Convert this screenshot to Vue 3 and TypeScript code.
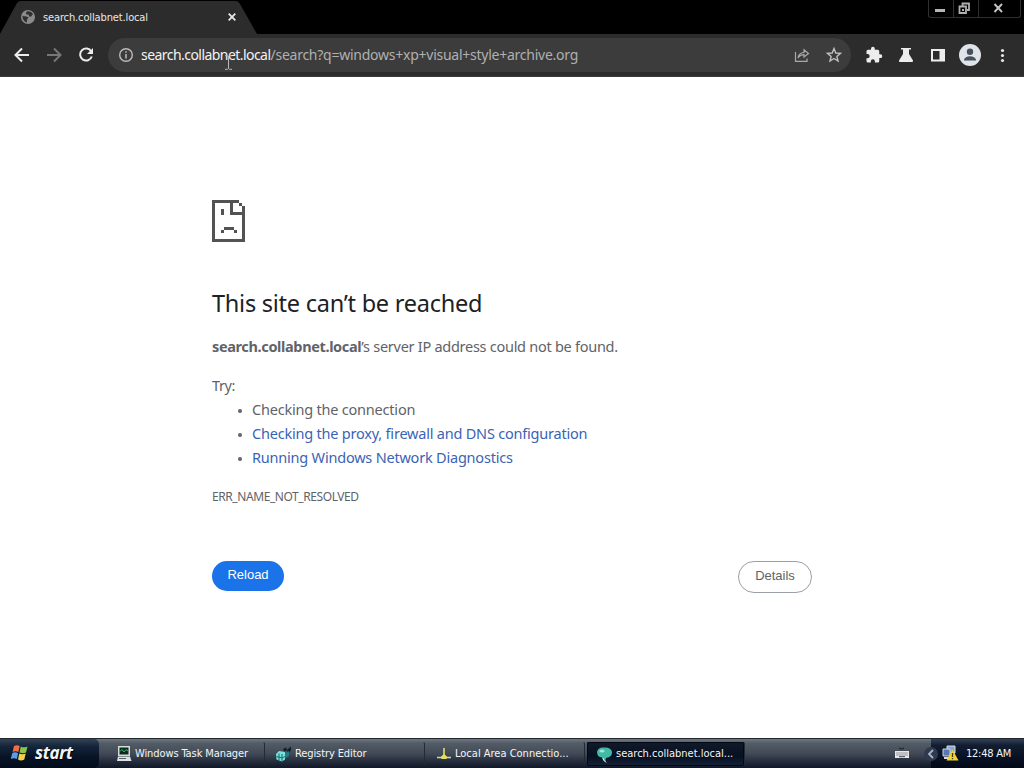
<script setup lang="ts">
interface Task {
  id: string
  label: string
  active?: boolean
}

const host = 'search.collabnet.local'
const query = '/search?q=windows+xp+visual+style+archive.org'

const tasks: Task[] = [
  { id: 'taskmgr', label: 'Windows Task Manager' },
  { id: 'regedit', label: 'Registry Editor' },
  { id: 'lan', label: 'Local Area Connectio...' },
  { id: 'browser', label: 'search.collabnet.local...', active: true },
]
</script>

<template>
  <div class="screen">
    <header class="titlebar">
      <div class="tab">
        <svg class="tab-shape" width="258" height="34" viewBox="0 0 258 34">
          <path d="M0 34L17 3Q18.500 1 21 1H236Q238.500 1 240 4L257 34Z" fill="#2c2c2c" />
        </svg>
        <svg class="globe" width="16" height="16" viewBox="0 0 16 16">
          <circle cx="8" cy="8" r="7" fill="#8b8b8b" />
          <path d="M2.500 6.500C4 8 6 6.500 8.500 8.500C8 10 6.500 9.500 7 13.400C4.500 13 2.300 10.500 2.500 6.500ZM7 2.500C9 2 11.500 2.700 13 5.200C11.500 6 12 8 9.800 7.800C8.500 7 9.500 5.500 7.500 5.500C5.500 5.500 5.500 3.500 7 2.500Z" fill="#303030" />
        </svg>
        <span class="tab-title">{{ host }}</span>
        <svg class="tab-close" width="8" height="8" viewBox="0 0 8 8"><path d="M.7.7L7.300 7.300M7.300.7L.7 7.300" stroke="#e8e8e8" stroke-width="1.800" /></svg>
      </div>
      <div class="window-controls">
        <span class="wc"><svg width="26" height="17"><path d="M6 10.500h10" stroke="#b5b5b5" stroke-width="3" /></svg></span>
        <span class="wc"><svg width="25" height="17"><path d="M8.500 5.500V3.500h6.500v6.500h-2M5.500 6.500h6.500v6.500h-6.500z" stroke="#b0b0b0" stroke-width="1.800" fill="none" /><path d="M8 9h2v2h-2z" fill="#b0b0b0" /></svg></span>
        <span class="wc wide"><svg width="41" height="17"><path d="M15.500 4l7.500 8M23 4l-7.500 8" stroke="#c4c4c4" stroke-width="1.900" /></svg></span>
      </div>
    </header>

    <div class="toolbar">
      <svg class="nav" width="24" height="24" viewBox="0 0 24 24"><path d="M19 12H6M12 5.500L5.500 12L12 18.500" /></svg>
      <svg class="nav dim" width="24" height="24" viewBox="0 0 24 24"><path d="M5 12H18M12 5.500L18.500 12L12 18.500" /></svg>
      <svg class="nav" width="24" height="24" viewBox="0 0 24 24"><path d="M17.300 8.500A6 6 0 1 0 17.800 13.500" /><path d="M19 5V11H13Z" fill="#ececec" stroke="none" /></svg>
      <div class="omnibox">
        <svg class="info" width="16" height="16" viewBox="0 0 16 16"><circle cx="8" cy="8" r="6.300" fill="none" stroke="#bcbcbc" stroke-width="1.400" /><path d="M8 7v4.500M8 4.200v1.600" stroke="#bcbcbc" stroke-width="1.500" /></svg>
        <span class="url"><span class="host">{{ host }}</span><span class="query">{{ query }}</span></span>
        <svg class="share" width="18" height="18" viewBox="0 0 18 18"><path d="M2.500 6V15.300H14V12.500M5 12C5.500 8.500 7.500 6.700 11 6.500V3.700L15.500 7.500L11 11V8.700C8.500 8.700 6.500 9.700 5 12Z" fill="none" stroke="#a9a9a9" stroke-width="1.200" /></svg>
        <svg class="star" width="18" height="18" viewBox="0 0 18 18"><path d="M9 2.600L10.800 7L15.500 7.300L11.900 10.400L13 15L9 12.500L5 15L6.100 10.400L2.500 7.300L7.200 7Z" fill="none" stroke="#c1c1c1" stroke-width="1.400" /></svg>
      </div>
      <div class="actions">
        <svg width="18" height="18" viewBox="0 0 24 24"><path d="M20.500 11H19V7a2 2 0 0 0-2-2h-4V3.500a2.500 2.500 0 0 0-5 0V5H4a2 2 0 0 0-2 2v3.800h1.500a2.700 2.700 0 0 1 0 5.400H2V20a2 2 0 0 0 2 2h3.800v-1.500a2.700 2.700 0 0 1 5.400 0V22H17a2 2 0 0 0 2-2v-4h1.500a2.500 2.500 0 0 0 0-5Z" fill="#ededed" /></svg>
        <svg width="18" height="18" viewBox="0 0 18 18"><path d="M4 2H14V3.500H12V8L16 14.500Q16.300 16 15 16H3Q1.700 16 2 14.500L6 8V3.500H4Z" fill="#ededed" /></svg>
        <svg width="18" height="18" viewBox="0 0 18 18"><path d="M2 3H16V15.500H2ZM4 5V13.500H10.500V5Z" fill="#ededed" fill-rule="evenodd" /></svg>
        <svg width="22" height="22" viewBox="0 0 22 22"><circle cx="11" cy="11" r="11" fill="#dfe3ea" /><circle cx="11" cy="7.800" r="3.200" fill="#48505c" /><path d="M5 15.800Q6 12.300 11 12.300T17 15.800V16.500H5Z" fill="#48505c" /></svg>
        <svg width="18" height="18" viewBox="0 0 18 18" fill="#e4e4e4"><circle cx="9.500" cy="4.500" r="1.600" /><circle cx="9.500" cy="9.500" r="1.600" /><circle cx="9.500" cy="14.500" r="1.600" /></svg>
      </div>
      <svg class="cursor" width="9" height="15" viewBox="0 0 9 15"><path d="M1 .7H3.500L4.500 1.500L5.500.7H8M4.500 1.500V13.500M1 14.300H3.500L4.500 13.500L5.500 14.300H8" fill="none" stroke="#b9b9b9" /></svg>
    </div>

    <main class="page">
      <div class="error">
        <svg class="sad" width="34" height="42" viewBox="0 0 34 42" shape-rendering="crispEdges" fill="#535353">
          <path d="M0 0H27V3H3V39H30V15H18V3H21V12H30V6H33V42H0ZM27 3H30V6H27ZM9 9H12V15H9ZM12 27H22V30H12ZM9 30H12V33H9ZM22 30H25V33H22Z" />
        </svg>
        <h1>This site can’t be reached</h1>
        <p class="summary"><strong>{{ host }}</strong><span>’s server IP address could not be found.</span></p>
        <p class="try">Try:</p>
        <ul>
          <li><span>Checking the connection</span></li>
          <li><a>Checking the proxy, firewall and DNS configuration</a></li>
          <li><a>Running Windows Network Diagnostics</a></li>
        </ul>
        <p class="code">ERR_NAME_NOT_RESOLVED</p>
        <div class="buttons">
          <button class="reload">Reload</button>
          <button class="details">Details</button>
        </div>
      </div>
    </main>

    <footer class="taskbar">
      <div class="start">
        <svg width="20" height="18" viewBox="0 0 20 18">
          <path d="M4 2Q7 .3 9.700 2L8.400 8Q5.500 6.500 2.600 8Z" fill="#ee7040" />
          <path d="M10.800 2.500Q13.500 4.200 17.500 2.500L16 8.500Q13 10 9.500 8.400Z" fill="#8bc64b" />
          <path d="M2.300 9Q5.200 7.600 8.100 9.200L6.800 15Q4 13.500.8 15Z" fill="#5d9ce8" />
          <path d="M9.300 9.500Q12.500 11 15.700 9.500L14.300 15.500Q11 17.300 8 15.500Z" fill="#f3d14c" />
        </svg>
        <span>start</span>
      </div>
      <div class="tasks">
        <div v-for="t in tasks" :key="t.id" class="task" :class="[t.id, { active: t.active }]">
          <svg v-if="t.id === 'taskmgr'" width="16" height="16" viewBox="0 0 16 16"><path d="M2 0H14V10H2Z" fill="#d5dcd8" /><path d="M3.500 1.500H12.500V8.500H3.500Z" fill="#092b1b" /><path d="M4 5.500L6 3.500L8 6L10 3.500L12 5" fill="none" stroke="#39b46c" /><path d="M2 10.500H14L15.500 15H1Z" fill="#dde2e2" /><path d="M3 12.500H10" stroke="#59605f" /></svg>
          <svg v-else-if="t.id === 'regedit'" width="16" height="16" viewBox="0 0 16 16"><path d="M0 8L3 5L9 6V13.500L6 15.500L.5 13.500Z" fill="#7fe0da" /><path d="M.5 10.500L6 12L9 10.500M3 7.500V14.500M6 8V15" stroke="#126b70" fill="none" /><path d="M7 3L10 1.500L11 4L8.500 5.500ZM11 4L15 .5V4L12 8Z" fill="#0a2028" /><path d="M9 7L13 5V10L9 12.500Z" fill="#1e7d84" /></svg>
          <svg v-else-if="t.id === 'lan'" width="16" height="16" viewBox="0 0 16 16"><path d="M8 2V9" stroke="#e9e67a" stroke-width="1.500" /><path d="M1 11.500H15" stroke="#d2d8a0" stroke-width="1.500" /><path d="M5 10.500L8 8L11 10.500L10.500 13H5.500Z" fill="#e8dd55" /></svg>
          <svg v-else width="17" height="17" viewBox="0 0 17 17"><path d="M1 6Q2 1 8 1.500Q15 1 16 6Q16.500 11 10 12Q9 13 10 16Q6.500 14.500 6 11.500Q1 11 1 6Z" fill="#42b9a5" /><path d="M3 5Q6 2 9 5Q6 8 3 5Z" fill="#a9e5d6" /><path d="M7 12Q7 14 10 16.500" stroke="#dfede9" fill="none" /></svg>
          <span>{{ t.label }}</span>
        </div>
      </div>
      <svg class="keyboard" width="14" height="12" viewBox="0 0 14 12"><path d="M4 1Q6 3 9 1" stroke="#1a1d24" fill="none" /><path d="M0 4H14V11H0Z" fill="#e8e8e8" /><path d="M1.500 6H13M1.500 8H13" stroke="#424750" stroke-dasharray="1 1" /><path d="M4 9.700H10" stroke="#424750" /></svg>
      <div class="tray">
        <svg class="chevron" width="14" height="16" viewBox="0 0 14 16"><circle cx="7" cy="8" r="7" fill="#2d3a50" /><path d="M9 4L5 8L9 12" fill="none" stroke="#a9b3c3" stroke-width="1.800" /></svg>
        <svg class="net" width="17" height="17" viewBox="0 0 17 17"><path d="M5 1H13V8H5Z" fill="#8ba6cf" stroke="#d5deea" /><path d="M1 4H8V11H1Z" fill="#5879ae" stroke="#cbd6e5" /><path d="M2 13H8" stroke="#d5d8e0" stroke-width="2" /><path d="M10.500 4.500L16.500 15.500H4.500Z" fill="#f4d22e" /><path d="M10.500 8V12M10.500 13V14.300" stroke="#443d16" stroke-width="1.300" /></svg>
        <span class="clock">12:48 AM</span>
      </div>
    </footer>
  </div>
</template>

<style>
body { margin: 0; overflow: hidden; }
</style>

<style scoped>
.screen { width: 1024px; height: 768px; display: flex; flex-direction: column; background: #fff; overflow: hidden; font-family: "Noto Sans", "Open Sans", sans-serif; }
svg { display: block; flex: none; }
span, a { white-space: nowrap; }
.titlebar { height: 34px; flex: none; background: #000; display: flex; justify-content: space-between; align-items: flex-start; }
.tab { position: relative; width: 258px; height: 34px; box-sizing: border-box; padding-left: 20px; display: flex; align-items: center; }
.tab-shape { position: absolute; left: 0; top: 0; }
.globe, .tab-title, .tab-close { position: relative; }
.tab-title { margin-left: 7px; padding-top: 1px; width: 185px; color: #e9e9e9; font: 11px/16px "DejaVu Sans Condensed", "DejaVu Sans", sans-serif; font-stretch: condensed; letter-spacing: -.13px; }
.window-controls { display: flex; height: 17px; margin-right: 3px; border: 1px solid #303030; border-top: 0; border-radius: 0 0 3px 3px; }
.wc { width: 24px; overflow: hidden; }
.wc + .wc { border-left: 1px solid #303030; }
.wc.wide { width: 41px; }
.toolbar { position: relative; height: 43px; flex: none; box-sizing: border-box; padding: 0 0 0 10px; display: flex; align-items: center; background: #2c2c2c; border-bottom: 1px solid #3a3a3a; }
.nav { margin-right: 8px; fill: none; stroke: #ececec; stroke-width: 2; }
.nav.dim { stroke: #777; }
.omnibox { width: 743px; height: 34px; box-sizing: border-box; margin-left: 2px; padding: 0 8px 0 10px; border-radius: 17px; background: #3c3c3c; display: flex; align-items: center; }
.url { margin-left: 7px; padding-bottom: 1px; flex: 1; font-size: 14px; line-height: 20px; }
.host { color: #f3f3f3; letter-spacing: -.55px; }
.query { color: #b0b0b0; letter-spacing: -.25px; }
.share { margin-right: 14px; }
.actions { display: flex; align-items: center; gap: 14px; margin-left: 14px; }
.actions svg:nth-child(4) { margin: 0 -2px; }
.cursor { position: absolute; left: 224px; top: 21px; }
.page { flex: 1; display: flex; justify-content: center; }
.error { width: 600px; padding-top: 123px; color: #5f6368; font-size: 14.5px; line-height: 24px; }
h1 { margin: 43px 0 0; font-size: 23.5px; line-height: 36px; font-weight: 400; color: #202124; letter-spacing: -.25px; }
p { margin: 0; }
.summary { margin-top: 13px; letter-spacing: -.27px; }
.summary strong { letter-spacing: -.36px; }
.try { margin-top: 15px; letter-spacing: -.4px; }
ul { margin: 0; padding-left: 40px; list-style: none; letter-spacing: -.21px; }
li { position: relative; }
li::before { content: ""; position: absolute; left: -14px; top: 12px; width: 4px; height: 4px; border-radius: 50%; background: #5f6368; }
a { color: #3b63b5; }
.code { margin-top: 16px; font-size: 12px; letter-spacing: -.42px; }
.buttons { margin-top: 52px; display: flex; justify-content: space-between; align-items: flex-start; }
button { font: 13px/20px "Liberation Sans", sans-serif; padding: 0; border-radius: 16px; box-sizing: border-box; }
.reload { width: 72px; height: 30px; background: #1a73e8; color: #fff; border: 0; padding-bottom: 2px; }
.details { width: 74px; height: 32px; background: #fff; color: #5f6368; border: 1px solid #9aa0a6; padding-bottom: 2px; }
.taskbar { height: 30px; flex: none; box-sizing: border-box; border-top: 1px solid #20272d; display: flex; background: linear-gradient(#6f7780 0, #535b66 15%, #424a57 50%, #242c3c 78%, #101828 100%); color: #f3f5f7; font: 11px/16px "DejaVu Sans Condensed", "DejaVu Sans", sans-serif; font-stretch: condensed; }
.start { width: 99px; box-sizing: border-box; padding: 0 0 2px 10px; display: flex; align-items: center; gap: 5px; border-radius: 0 5px 5px 0; background: linear-gradient(#334457 0, #15253a 25%, #081527 60%, #020b1a 100%); }
.start span { font: italic bold 17px/20px "Open Sans", sans-serif; letter-spacing: -.3px; text-shadow: 1px 1px 1px #000; }
.tasks { display: flex; gap: 2px; padding: 3px 0 2px 8px; }
.task { width: 158px; box-sizing: border-box; padding-left: 9px; display: flex; align-items: center; gap: 3px; border-right: 1px solid #222a36; border-radius: 2px; letter-spacing: -.1px; }
.task.lan, .task.browser { letter-spacing: 0; }
.task.active { background: linear-gradient(#101a2b, #071021 60%, #162239); box-shadow: inset 0 0 0 1px #030812; }
.keyboard { margin: 8px 22px 0 auto; }
.tray { width: 93px; box-sizing: border-box; padding-right: 13px; display: flex; align-items: center; background: linear-gradient(#354154 0, #121d30 22%, #081124 65%, #020a18 100%); }
.chevron { margin-left: -7px; }
.net { margin-left: 4px; }
.clock { margin-left: auto; letter-spacing: -.25px; }
</style>
